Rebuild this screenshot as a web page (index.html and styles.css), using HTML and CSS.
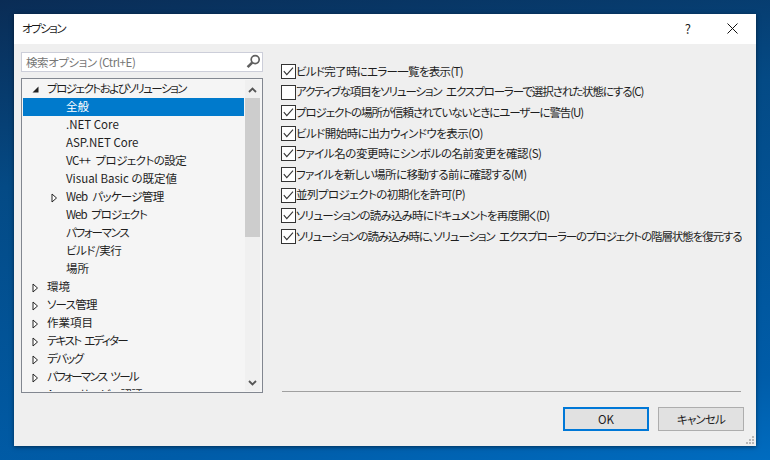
FILE: index.html
```html
<!DOCTYPE html>
<html lang="ja">
<head>
<meta charset="utf-8">
<title>オプション</title>
<link rel="stylesheet" href="styles.css">
</head>
<body>
<div class="dialog">
  <header class="titlebar">
    <span class="title tight-15">オプション</span>
    <span class="help">?</span>
    <svg class="close" width="11" height="11" viewBox="0 0 11 11"><path d="M.5.5l10 10M10.5.5l-10 10" stroke="#111" stroke-width="1" fill="none"/></svg>
  </header>
  <div class="body">
    <div class="columns">
      <aside class="left">
        <div class="search">
          <span class="search-text tight-4">検索オプション (Ctrl+E)</span>
          <svg class="search-icon" width="15" height="15" viewBox="0 0 15 15"><circle cx="9.2" cy="5.6" r="4" fill="none" stroke="#5f5f5f" stroke-width="1.7"/><path d="M6.2 8.6L1.6 13.2" stroke="#5f5f5f" stroke-width="2.6"/></svg>
        </div>
        <div class="tree">
          <div class="rows">
            <div class="row"><svg class="arrow open" width="7" height="7" viewBox="0 0 7 7"><path d="M6.5.5v6h-6z" fill="#222"/></svg><span class="tight-15">プロジェクトおよびソリューション</span></div>
            <div class="row sub selected"><span>全般</span></div>
            <div class="row sub"><span>.NET Core</span></div>
            <div class="row sub"><span>ASP.NET Core</span></div>
            <div class="row sub"><span class="tight-5 spaced">VC++ プロジェクトの設定</span></div>
            <div class="row sub"><span>Visual Basic の既定値</span></div>
            <div class="row sub has-arrow"><svg class="arrow" width="7" height="10" viewBox="0 0 7 10"><path d="M1 1l4.5 4L1 9z" fill="#fff" stroke="#222"/></svg><span class="tight-7 spaced">Web パッケージ管理</span></div>
            <div class="row sub"><span class="tight-10 spaced">Web プロジェクト</span></div>
            <div class="row sub"><span class="tight-13">パフォーマンス</span></div>
            <div class="row sub"><span class="tight-4">ビルド/実行</span></div>
            <div class="row sub"><span>場所</span></div>
            <div class="row"><svg class="arrow" width="7" height="10" viewBox="0 0 7 10"><path d="M1 1l4.5 4L1 9z" fill="#fff" stroke="#222"/></svg><span>環境</span></div>
            <div class="row"><svg class="arrow" width="7" height="10" viewBox="0 0 7 10"><path d="M1 1l4.5 4L1 9z" fill="#fff" stroke="#222"/></svg><span class="tight-8">ソース管理</span></div>
            <div class="row"><svg class="arrow" width="7" height="10" viewBox="0 0 7 10"><path d="M1 1l4.5 4L1 9z" fill="#fff" stroke="#222"/></svg><span>作業項目</span></div>
            <div class="row"><svg class="arrow" width="7" height="10" viewBox="0 0 7 10"><path d="M1 1l4.5 4L1 9z" fill="#fff" stroke="#222"/></svg><span class="tight-17 spaced">テキスト エディター</span></div>
            <div class="row"><svg class="arrow" width="7" height="10" viewBox="0 0 7 10"><path d="M1 1l4.5 4L1 9z" fill="#fff" stroke="#222"/></svg><span class="tight-13">デバッグ</span></div>
            <div class="row"><svg class="arrow" width="7" height="10" viewBox="0 0 7 10"><path d="M1 1l4.5 4L1 9z" fill="#fff" stroke="#222"/></svg><span class="tight-17 spaced">パフォーマンス ツール</span></div>
            <div class="row"><svg class="arrow" width="7" height="10" viewBox="0 0 7 10"><path d="M1 1l4.5 4L1 9z" fill="#fff" stroke="#222"/></svg><span class="tight-5 spaced">Azure サービス認証</span></div>
          </div>
          <div class="scrollbar">
            <svg class="chev" width="9" height="6" viewBox="0 0 9 6"><path d="M1 5l3.5-3.5L8 5" fill="none" stroke="#555" stroke-width="1.8"/></svg>
            <div class="track"><div class="thumb"></div></div>
            <svg class="chev" width="9" height="6" viewBox="0 0 9 6"><path d="M1 1l3.5 3.5L8 1" fill="none" stroke="#555" stroke-width="1.8"/></svg>
          </div>
        </div>
      </aside>
      <main class="right">
        <ul class="checks">
          <li class="check on tight-7">ビルド完了時にエラー一覧を表示(T)</li>
          <li class="check tight-11 spaced">アクティブな項目をソリューション エクスプローラーで選択された状態にする(C)</li>
          <li class="check on tight-11">プロジェクトの場所が信頼されていないときにユーザーに警告(U)</li>
          <li class="check on tight-5">ビルド開始時に出力ウィンドウを表示(O)</li>
          <li class="check on tight-4">ファイル名の変更時にシンボルの名前変更を確認(S)</li>
          <li class="check on tight-5">ファイルを新しい場所に移動する前に確認する(M)</li>
          <li class="check on tight-5">並列プロジェクトの初期化を許可(P)</li>
          <li class="check on tight-8">ソリューションの読み込み時にドキュメントを再度開く(D)</li>
          <li class="check on tight-11 spaced">ソリューションの読み込み時に、ソリューション エクスプローラーのプロジェクトの階層状態を復元する(H)</li>
        </ul>
        <div class="rule"></div>
      </main>
    </div>
    <footer class="footer">
      <button class="btn default">OK</button>
      <button class="btn"><span class="tight-8">キャンセル</span></button>
    </footer>
    <svg class="grip" width="9" height="9" viewBox="0 0 9 9"><path d="M6 0h2v2H6zM3 3h2v2H3zM6 3h2v2H6zM0 6h2v2H0zM3 6h2v2H3zM6 6h2v2H6z" fill="#b8b8b8"/></svg>
  </div>
</div>
</body>
</html>
```
FILE: styles.css
```css
* { box-sizing: border-box; }
html, body { margin: 0; height: 460px; overflow: hidden; }
body {
  padding: 14px;
  background: linear-gradient(172deg, #0a2c55 0%, #044a85 33%, #005ca8 85%, #006cc0 100%);
  font-family: "Noto Sans CJK JP", "Noto Sans", sans-serif;
  font-size: 11.5px;
  font-feature-settings: "palt";
  color: #1e1e1e;
}
.tight-4 { letter-spacing: -0.42px; }
.tight-5 { letter-spacing: -0.55px; }
.tight-7 { letter-spacing: -0.7px; }
.tight-8 { letter-spacing: -0.8px; }
.tight-10 { letter-spacing: -1px; }
.tight-11 { letter-spacing: -1.1px; }
.tight-13 { letter-spacing: -1.3px; }
.tight-15 { letter-spacing: -1.5px; }
.tight-17 { letter-spacing: -1.7px; }
.spaced { word-spacing: 3px; }
.dialog {
  width: 742px;
  height: 432px;
  display: flex;
  flex-direction: column;
  background: #efefef;
  box-shadow: 0 1px 4px rgba(0, 0, 0, 0.5);
}
.titlebar {
  height: 30px;
  flex: none;
  display: flex;
  align-items: center;
  background: #fff;
  padding: 0 18px 2px 8px;
}
.title { flex: 1; color: #1a1a1a; }
.help { margin-right: 36px; font-size: 13px; }
.body {
  flex: 1;
  position: relative;
  display: flex;
  flex-direction: column;
  padding: 8px 12px 15px 7px;
}
.columns { display: flex; gap: 18px; height: 341px; flex: none; }
.left { width: 242px; flex: none; display: flex; flex-direction: column; gap: 6px; }
.search {
  height: 20px;
  flex: none;
  display: flex;
  align-items: center;
  justify-content: space-between;
  padding: 0 1px 1px 4px;
  background: #fff;
  border: 1px solid #ccced9;
  color: #767676;
}
.tree {
  height: 315px;
  flex: none;
  display: flex;
  overflow: hidden;
  padding: 1px;
  background: #f5f5f5;
  border: 1px solid #828790;
}
.rows { flex: 1; min-width: 0; overflow: hidden; }
.row {
  height: 18px;
  position: relative;
  display: flex;
  align-items: center;
  padding: 0 0 2px 24px;
  white-space: nowrap;
}
.row.sub { padding-left: 43px; }
.arrow { position: absolute; left: 9px; top: 5px; }
.arrow.open { top: 6px; }
.has-arrow .arrow { left: 28px; }
.selected { background: #007acc; color: #fff; }
.scrollbar {
  width: 15px;
  flex: none;
  margin: 0 1px;
  display: flex;
  flex-direction: column;
  align-items: center;
  background: #f0f0f0;
  padding: 7px 0 5px;
}
.track { flex: 1; width: 100%; margin-top: 5px; margin-bottom: 9px; }
.thumb { height: 139px; background: #cdcdcd; }
.right { flex: 1; min-width: 0; display: flex; flex-direction: column; padding-top: 9px; }
.checks { list-style: none; margin: 0 2px 0 0; padding: 0; display: flex; flex-direction: column; }
.check {
  height: 20.6px;
  display: flex;
  align-items: center;
  white-space: pre;
  overflow: hidden;
  padding: 0 0 1px 15px;
  position: relative;
}
.check::before {
  content: "";
  position: absolute;
  left: 0;
  top: 3px;
  width: 13px;
  height: 13px;
  background: #fff;
  border: 1px solid #333;
}
.check.on::before {
  background: #fff url("data:image/svg+xml,%3Csvg xmlns='http://www.w3.org/2000/svg' width='11' height='11' viewBox='0 0 11 11'%3E%3Cpath d='M.8 5.2l3 3.4L10 1.6' fill='none' stroke='%23333' stroke-width='1.1'/%3E%3C/svg%3E") center / 11px 11px no-repeat;
}
.rule { margin: auto 3px 1px 1px; height: 1px; background: #a0a0a0; flex: none; }
.footer {
  margin-top: 14px;
  display: flex;
  justify-content: flex-end;
  gap: 9px;
}
.btn {
  width: 86px;
  height: 24px;
  padding: 0;
  font: inherit;
  font-feature-settings: "palt";
  color: #1e1e1e;
  background: #e1e1e1;
  border: 1px solid #adadad;
}
.btn.default { border: 2px solid #0078d7; }
.grip { position: absolute; right: 1px; bottom: 1px; }
```
